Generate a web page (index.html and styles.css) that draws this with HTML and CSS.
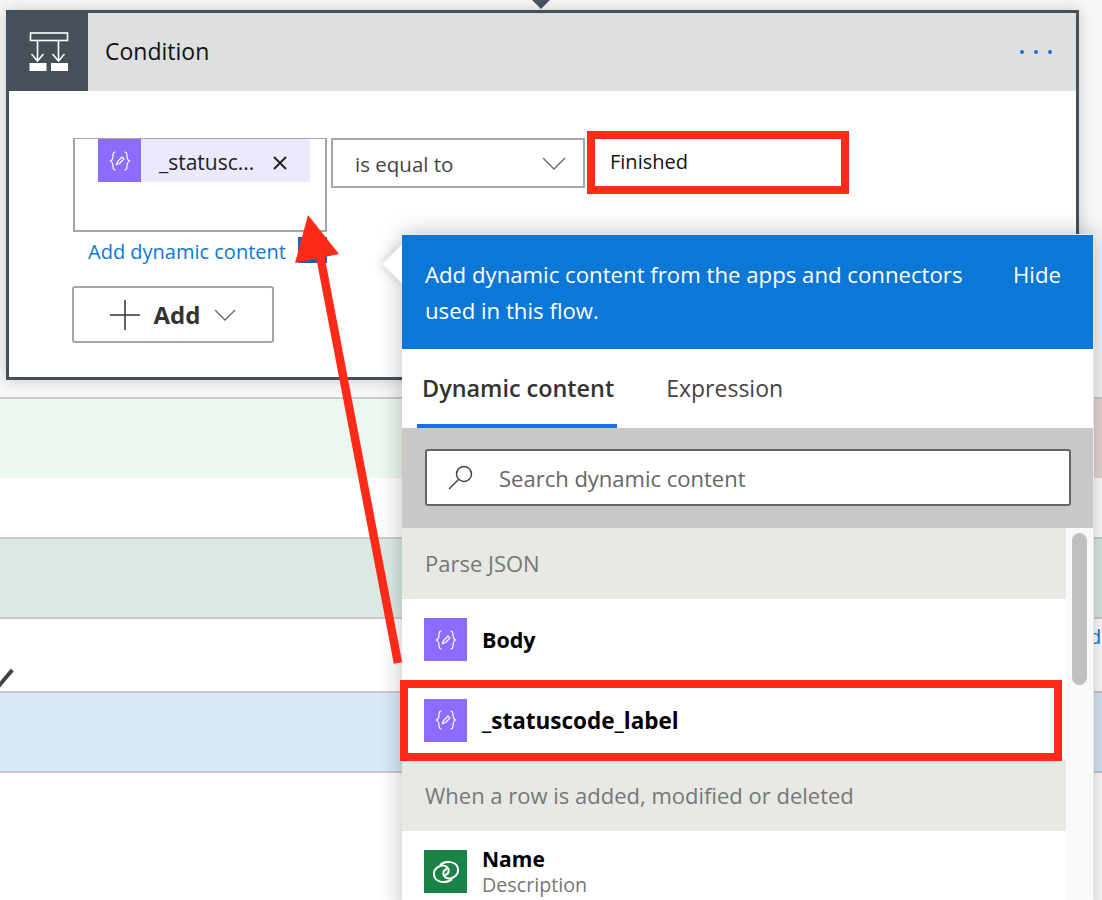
FILE: index.html
```html
<!DOCTYPE html>
<html lang="en">
<head>
    <meta charset="UTF-8">
    <title>Condition</title>
    <link rel="stylesheet" href="styles.css">
</head>
<body>
    <div class="page">
        <div class="top">
            <div class="connector"></div>
            <div class="card">
                <div class="card-head">
                    <div class="card-icon">
                        <svg width="40" height="40" viewBox="0 0 40 40" fill="none" stroke="#fff" stroke-width="1.600">
                            <rect x="1.500" y="1" width="37" height="7.500"/>
                            <path d="M8.500 8v21M2.500 22l6 7 6-7M29.500 8v21M23.500 22l6 7 6-7"/>
                            <rect x="0.500" y="31" width="17" height="8" fill="#fff" stroke="none"/>
                            <rect x="22" y="31" width="17" height="8" fill="#fff" stroke="none"/>
                        </svg>
                    </div>
                    <div class="card-title">Condition</div>
                    <div class="card-more"><span></span><span></span><span></span></div>
                </div>
                <div class="card-body">
                    <div class="cond-row">
                        <div class="cond-left">
                            <div class="cond-field">
                                <div class="token">
                                    <div class="token-icon">
                                        <svg width="24" height="24" viewBox="0 0 24 24" fill="none" stroke="#fff" stroke-width="1.200">
                                            <path d="M7.500 3C5.500 3 5 4 5 6.500 5 9.500 4.500 11 2.500 12 4.500 13 5 14.500 5 17.500 5 20 5.500 21 7.500 21M16.500 3C18.500 3 19 4 19 6.500 19 9.500 19.500 11 21.500 12 19.500 13 19 14.500 19 17.500 19 20 18.500 21 16.500 21"/>
                                            <path d="M8.500 15.500l1-3 4.500-4.500 2 2-4.500 4.500z"/>
                                        </svg>
                                    </div>
                                    <span class="token-text">_statusc...</span>
                                    <svg class="token-x" width="16" height="16" viewBox="0 0 16 16" stroke="#222" stroke-width="2"><path d="M2 2l12 12M14 2L2 14"/></svg>
                                </div>
                            </div>
                            <div class="add-row">
                                <a class="add-link">Add dynamic content</a>
                                <span class="add-mark"></span>
                            </div>
                        </div>
                        <div class="cond-select">
                            <span>is equal to</span>
                            <svg width="24" height="14" viewBox="0 0 24 14" fill="none" stroke="#666" stroke-width="1.300"><path d="M1 1l11 11L23 1"/></svg>
                        </div>
                        <div class="cond-value">Finished</div>
                    </div>
                    <div class="add-btn">
                        <svg width="30" height="30" viewBox="0 0 30 30" stroke="#333" stroke-width="1.500"><path d="M15 0v30M0 15h30"/></svg>
                        <b>Add</b>
                        <svg width="22" height="12" viewBox="0 0 22 12" fill="none" stroke="#666" stroke-width="1.300"><path d="M1 1l10 10L21 1"/></svg>
                    </div>
                </div>
            </div>
        </div>

        <div class="band band-green"><div class="band-end"></div></div>
        <div class="gap"></div>
        <div class="band band-teal"></div>
        <div class="gap gap-tall"><i class="pencil"></i></div>
        <div class="band band-blue"></div>

        <div class="stray-link">d</div>

        <div class="popover">
            <div class="pop-arrow"></div>
            <div class="pop-head">
                <p>Add dynamic content from the apps and connectors used in this flow.</p>
                <span>Hide</span>
            </div>
            <div class="tabs">
                <div class="tab active">Dynamic content</div>
                <div class="tab">Expression</div>
            </div>
            <div class="search-band">
                <div class="search-box">
                    <svg width="28" height="28" viewBox="0 0 28 28" fill="none" stroke="#444" stroke-width="1.500">
                        <circle cx="17" cy="10" r="7.500"/>
                        <path d="M11.500 15.500L2 25"/>
                    </svg>
                    <span>Search dynamic content</span>
                </div>
            </div>
            <div class="list-wrap">
                <div class="list">
                    <div class="section">Parse JSON</div>
                    <div class="item">
                        <div class="item-icon">
                            <svg width="24" height="24" viewBox="0 0 24 24" fill="none" stroke="#fff" stroke-width="1.200">
                                <path d="M7.500 3C5.500 3 5 4 5 6.500 5 9.500 4.500 11 2.500 12 4.500 13 5 14.500 5 17.500 5 20 5.500 21 7.500 21M16.500 3C18.500 3 19 4 19 6.500 19 9.500 19.500 11 21.500 12 19.500 13 19 14.500 19 17.500 19 20 18.500 21 16.500 21"/>
                                <path d="M8.500 15.500l1-3 4.500-4.500 2 2-4.500 4.500z"/>
                            </svg>
                        </div>
                        <b class="item-name">Body</b>
                    </div>
                    <div class="item item-marked">
                        <div class="item-icon">
                            <svg width="24" height="24" viewBox="0 0 24 24" fill="none" stroke="#fff" stroke-width="1.200">
                                <path d="M7.500 3C5.500 3 5 4 5 6.500 5 9.500 4.500 11 2.500 12 4.500 13 5 14.500 5 17.500 5 20 5.500 21 7.500 21M16.500 3C18.500 3 19 4 19 6.500 19 9.500 19.500 11 21.500 12 19.500 13 19 14.500 19 17.500 19 20 18.500 21 16.500 21"/>
                                <path d="M8.500 15.500l1-3 4.500-4.500 2 2-4.500 4.500z"/>
                            </svg>
                        </div>
                        <b class="item-name wide">_statuscode_label</b>
                    </div>
                    <div class="section">When a row is added, modified or deleted</div>
                    <div class="item">
                        <div class="item-icon green">
                            <svg width="30" height="30" viewBox="0 0 30 30" fill="none" stroke="#fff" stroke-width="2">
                                <path d="M9 8c5-5 17-4 18 4 1 7-8 12-13 8-3-3-2-7 2-8"/>
                                <path d="M21 22c-5 5-17 4-18-4-1-7 8-12 13-8 3 3 2 7-2 8"/>
                            </svg>
                        </div>
                        <div class="item-text">
                            <b>Name</b>
                            <small>Description</small>
                        </div>
                    </div>
                </div>
                <div class="scroll"><div class="thumb"></div></div>
            </div>
        </div>

        <svg class="pointer" width="1102" height="900" viewBox="0 0 1102 900">
            <path d="M398 663L319 250" stroke="#ff2a17" stroke-width="8.500" fill="none"/>
            <path d="M308 215L339 254 295 263z" fill="#ff2a17"/>
        </svg>
    </div>
</body>
</html>
```

FILE: styles.css
```css
*, *::after {
    box-sizing: border-box;
}

body {
    margin: 0;
    font-family: "Open Sans", "Noto Sans", sans-serif;
    background: #fff;
}

.page {
    position: relative;
    width: 1102px;
    height: 900px;
    overflow: hidden;
    background: #fff;
}

.top {
    height: 397px;
    padding: 10px 0 0 6px;
    background: #f7f7f7;
}

.connector {
    position: absolute;
    left: 534px;
    top: -8px;
    width: 14px;
    height: 14px;
    background: #474f58;
    transform: rotate(45deg);
}

.card {
    width: 1073px;
    height: 370px;
    border: 3px solid #474f58;
    background: #fff;
    box-shadow: 0 0 14px rgba(0, 0, 0, 0.18);
}

.card-head {
    display: flex;
    align-items: center;
    height: 78px;
    background: #dedfe1;
}

.card-icon {
    display: flex;
    align-items: center;
    justify-content: center;
    width: 79px;
    height: 78px;
    background: #474f58;
}

.card-title {
    flex: 1;
    margin: -2px 0 0 17px;
    font-size: 23px;
    color: #111;
}

.card-more {
    display: flex;
    gap: 10px;
    margin-right: 24px;
}

.card-more span {
    width: 4px;
    height: 4px;
    border-radius: 50%;
    background: #0a78d8;
}

.card-body {
    padding: 47px 0 0 63px;
}

.cond-row {
    display: flex;
    align-items: flex-start;
    gap: 4px;
}

.cond-left {
    width: 254px;
    margin-left: 1px;
}

.cond-field {
    height: 94px;
    padding-left: 23px;
    border: 2px solid #a6a6a6;
    border-top-width: 1px;
}

.token {
    display: flex;
    align-items: center;
    width: 212px;
    height: 43px;
    background: #ece9fd;
}

.token-icon {
    display: flex;
    align-items: center;
    justify-content: center;
    width: 43px;
    height: 43px;
    background: #8c6cff;
}

.token-text {
    width: 113px;
    margin: 3px 0 0 18px;
    font-size: 21px;
    color: #222;
}

.token-x {
    margin-top: 4px;
}

.add-row {
    display: flex;
    justify-content: space-between;
    height: 26px;
    margin-top: 5px;
    padding-left: 15px;
}

.add-link {
    font-size: 20px;
    line-height: 30px;
    color: #0a78d8;
    white-space: nowrap;
}

.add-mark {
    width: 29px;
    height: 26px;
    background: #1b5fb5;
}

.cond-select {
    display: flex;
    align-items: center;
    justify-content: space-between;
    width: 254px;
    height: 50px;
    padding: 2px 17px 0 22px;
    border: 2px solid #a6a6a6;
    font-size: 20.500px;
    color: #444;
}

.cond-value {
    width: 262px;
    height: 63px;
    margin: -7px 0 0 -2px;
    padding-left: 15px;
    border: 8px solid #ff2a17;
    font-size: 20px;
    line-height: 46px;
    color: #111;
}

.add-btn {
    display: flex;
    align-items: center;
    justify-content: center;
    gap: 14px;
    width: 202px;
    height: 57px;
    margin-top: 23px;
    border: 2px solid #a6a6a6;
    border-radius: 3px;
    font-size: 24px;
    color: #333;
}

.band {
    position: relative;
    height: 82px;
    border-top: 2px solid #cbc9c9;
}

.band-green {
    height: 81px;
    background: #ecf7ef;
}

.band-teal {
    background: #dbebe3;
    border-bottom: 2px solid #cbc9c9;
}

.band-blue {
    background: #d8e9f8;
    border-bottom: 2px solid #cbc9c9;
}

.band-end {
    position: absolute;
    right: 0;
    top: 0;
    width: 8px;
    height: 79px;
    background: #e8d8d8;
}

.gap {
    position: relative;
    height: 59px;
    overflow: hidden;
}

.gap-tall {
    height: 72px;
}

.pencil {
    position: absolute;
    left: -5px;
    top: 57px;
    width: 21px;
    height: 4px;
    background: #444;
    transform: rotate(-50deg);
}

.stray-link {
    position: absolute;
    left: 1089px;
    top: 623px;
    font-size: 20px;
    color: #0a78d8;
}

.popover {
    position: absolute;
    left: 402px;
    top: 234px;
    width: 692px;
    height: 680px;
    background: #fff;
    border-top: 1px solid #e8e8e8;
    border-right: 1px solid #e8e8e8;
    box-shadow: 0 0 22px rgba(0, 0, 0, 0.25);
}

.pop-arrow {
    position: absolute;
    left: -14px;
    top: 15px;
    width: 28px;
    height: 28px;
    background: #fff;
    transform: rotate(45deg);
    box-shadow: -3px 3px 8px rgba(0, 0, 0, 0.12);
}

.pop-head {
    position: relative;
    display: flex;
    justify-content: space-between;
    height: 114px;
    padding: 22px 0 0 23px;
    background: #0b78d8;
    color: #fff;
    font-size: 22.200px;
    line-height: 36px;
}

.pop-head p {
    width: 570px;
    margin: 0;
}

.pop-head span {
    margin-right: 32px;
}

.tabs {
    display: flex;
    gap: 44px;
    height: 79px;
    padding-left: 15px;
}

.tab {
    padding: 0 5px;
    line-height: 79px;
    font-size: 23px;
    color: #444;
}

.tab.active {
    padding: 0 3px 0 5px;
    font-size: 23.400px;
    font-weight: 600;
    color: #333;
    border-bottom: 4px solid #1a6cf0;
}

.search-band {
    height: 100px;
    padding: 21px 22px 21px 23px;
    background: #c8c8c6;
}

.search-box {
    display: flex;
    align-items: center;
    gap: 24px;
    height: 57px;
    padding-left: 20px;
    background: #fff;
    border: 2px solid #666;
    border-radius: 3px;
    font-size: 22px;
    color: #666;
}

.list-wrap {
    display: flex;
}

.list {
    width: 664px;
}

.section {
    height: 71px;
    padding-left: 23px;
    background: #e8e9e5;
    font-size: 22px;
    line-height: 71px;
    color: #777;
}

.item {
    position: relative;
    display: flex;
    align-items: center;
    gap: 15px;
    height: 81px;
    padding-left: 22px;
    font-size: 20px;
    color: #000;
}

.item-name {
    font-size: 21.500px;
}

.item-name.wide {
    font-size: 22.500px;
}

.item-marked {
    height: 80px;
}

.item-marked::after {
    content: "";
    position: absolute;
    left: -2px;
    top: 0;
    width: 662px;
    height: 81px;
    border: 8px solid #ff2a17;
}

.item-icon {
    display: flex;
    align-items: center;
    justify-content: center;
    width: 43px;
    height: 43px;
    background: #8c6cff;
}

.item-icon.green {
    background: #1a8348;
}

.item-text {
    display: flex;
    flex-direction: column;
}

.item-text b {
    font-size: 21px;
    line-height: 26px;
}

.item-text small {
    font-size: 19.700px;
    line-height: 26px;
    color: #777;
}

.scroll {
    width: 27px;
    padding: 5px 6px;
    background: #f9f9f9;
}

.thumb {
    width: 15px;
    height: 152px;
    border-radius: 8px;
    background: #c0c0c0;
}

.pointer {
    position: absolute;
    left: 0;
    top: 0;
    pointer-events: none;
}
```
